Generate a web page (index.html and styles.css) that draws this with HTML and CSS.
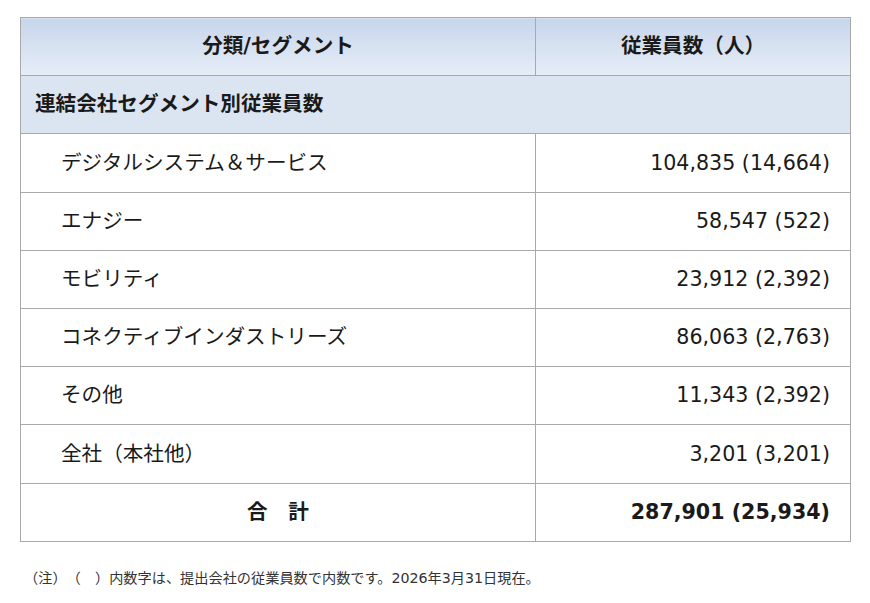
FILE: index.html
```html
<!DOCTYPE html>
<html lang="ja">
<head>
<meta charset="utf-8">
<link rel="stylesheet" href="styles.css">
</head>
<body>
<div class="page">
  <table class="emp">
    <thead>
      <tr class="head">
        <th class="c1">分類/セグメント</th>
        <th class="c2">従業員数（人）</th>
      </tr>
    </thead>
    <tbody>
      <tr class="group">
        <td colspan="2">連結会社セグメント別従業員数</td>
      </tr>
      <tr><td class="name">デジタルシステム＆サービス</td><td class="num">104,835 (14,664)</td></tr>
      <tr><td class="name">エナジー</td><td class="num">58,547 (522)</td></tr>
      <tr><td class="name">モビリティ</td><td class="num">23,912 (2,392)</td></tr>
      <tr><td class="name">コネクティブインダストリーズ</td><td class="num">86,063 (2,763)</td></tr>
      <tr><td class="name">その他</td><td class="num">11,343 (2,392)</td></tr>
      <tr><td class="name">全社（本社他）</td><td class="num">3,201 (3,201)</td></tr>
      <tr class="total"><td class="label">合　計</td><td class="num">287,901 (25,934)</td></tr>
    </tbody>
  </table>
  <p class="note">（注）（　）内数字は、提出会社の従業員数で内数です。2026年3月31日現在。</p>
</div>
</body>
</html>
```
FILE: styles.css
```css
html, body {
  margin: 0;
  padding: 0;
  background: #ffffff;
}
body {
  font-family: "DejaVu Sans", "Noto Sans CJK JP", sans-serif;
  color: #1a1a1a;
  text-spacing-trim: space-all;
}
.page {
  padding: 17px 0 0 20px;
}
.emp {
  border-collapse: collapse;
  width: 831px;
  table-layout: fixed;
  font-size: 20.6px;
}
.emp th, .emp td {
  border: 1px solid #a9a9a9;
  height: 58.2px;
  padding: 0;
  box-sizing: border-box;
  line-height: 1;
}
.c1 { width: 515px; }
.head th {
  background: linear-gradient(to bottom, #c7d6eb 0%, #e6edf7 100%);
  font-weight: bold;
  text-align: center;
}
.group td {
  background: #dbe5f2;
  font-weight: bold;
  padding-left: 14px;
  text-align: left;
}
.name {
  padding-left: 40px !important;
  text-align: left;
}
.num {
  text-align: right;
  padding-right: 20px !important;
}
.total td {
  font-weight: bold;
}
.total .label {
  text-align: center;
}
.note {
  margin: 25px 0 0 4px;
  font-size: 14.2px;
  color: #333;
}
```
